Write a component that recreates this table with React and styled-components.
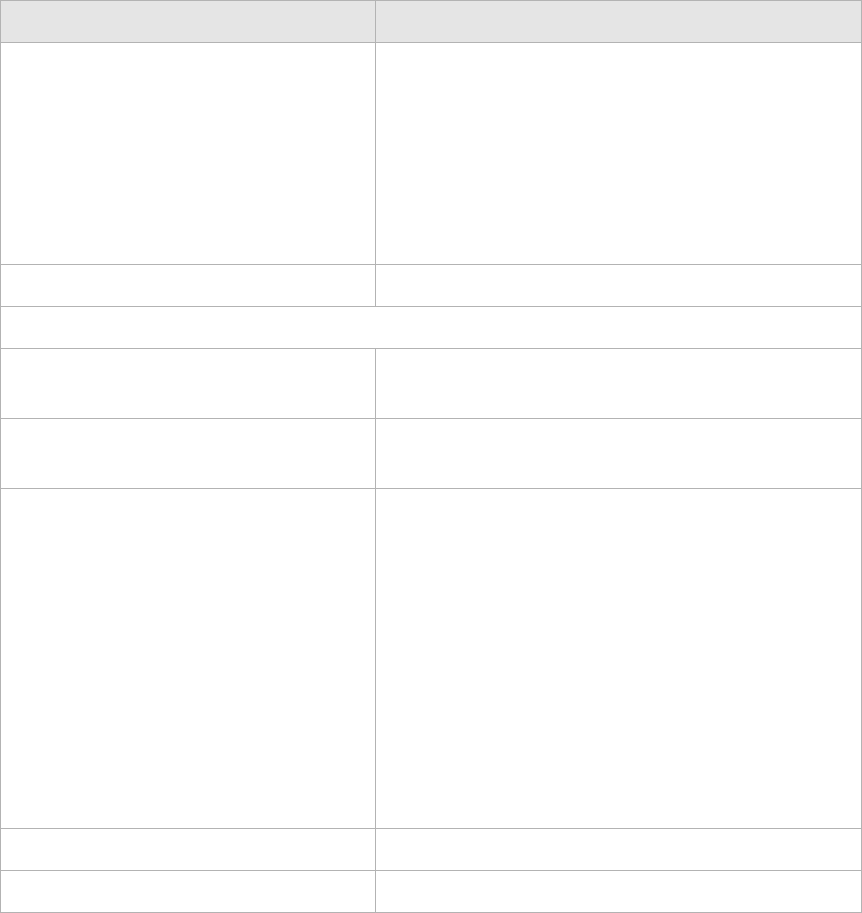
import React from 'react'
import styled, { createGlobalStyle } from 'styled-components'

const Global = createGlobalStyle`
  html, body { margin: 0; padding: 0; background: #fff; }
  body { font-family: "Liberation Sans", Arial, sans-serif; font-size: 14px; color: #333; }
`

const rows = [
  { h: 41, header: true },
  { h: 221 },
  { h: 41 },
  { h: 41, span: true },
  { h: 69 },
  { h: 69 },
  { h: 339 },
  { h: 41 },
  { h: 41 },
]

const Grid = styled.div`
  display: grid;
  grid-template-columns: 374px 485px;
  grid-template-rows: ${(p) => p.$rows};
  gap: 1px;
  padding: 1px;
  width: 862px;
  box-sizing: border-box;
  background: #b3b3b3;
`

const Cell = styled.div`
  background: ${(p) => (p.$header ? '#e5e5e5' : '#fff')};
  grid-column: ${(p) => (p.$span ? '1 / -1' : 'auto')};
`

export default function App() {
  return (
    <>
      <Global />
      <Grid $rows={rows.map((r) => r.h + 'px').join(' ')}>
        {rows.map((r, i) =>
          r.span ? (
            <Cell key={i} $span />
          ) : (
            <React.Fragment key={i}>
              <Cell $header={r.header} />
              <Cell $header={r.header} />
            </React.Fragment>
          )
        )}
      </Grid>
    </>
  )
}
